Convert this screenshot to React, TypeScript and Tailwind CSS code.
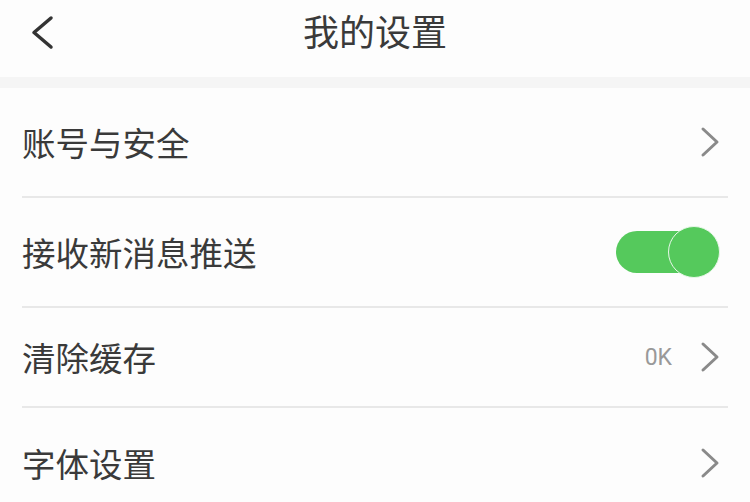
import React from "react";

const Chevron = () => (
  <svg width="20" height="32" viewBox="0 0 20 32" className="shrink-0">
    <polyline points="3,3 17,16 3,29" fill="none" stroke="#8a8a8a" strokeWidth="3" strokeLinecap="round" strokeLinejoin="round" />
  </svg>
);

const Toggle = () => (
  <div className="relative w-[104px] h-[52px] flex items-center shrink-0">
    <div className="w-[90px] h-[42px] rounded-full bg-[#55c95c]" />
    <div className="absolute right-0 top-0 w-[52px] h-[52px] rounded-full bg-[#55c95c] border-[1.5px] border-[#e8f7e9]" />
  </div>
);

export default function App() {
  const font = { fontFamily: '"Noto Sans CJK SC", "Noto Sans", sans-serif' };
  return (
    <div className="w-[750px] h-[502px] overflow-hidden bg-[#fdfdfd] text-[#3a3a3a]" style={font}>
      <div className="relative h-[77px] flex items-center justify-center">
        <svg width="24" height="36" viewBox="0 0 24 36" className="absolute left-[31px] top-[15px]">
          <polyline points="20,3 3,17.5 20,32" fill="none" stroke="#333333" strokeWidth="3.5" strokeLinecap="round" strokeLinejoin="round" />
        </svg>
        <div className="text-[36px] leading-none mb-[18px]">我的设置</div>
      </div>
      <div className="h-[11px] bg-[#f5f5f5]" />
      <div className="mx-[22px]">
        <div className="h-[110px] flex items-center justify-between border-b-2 border-[#e8e8e8] pr-[8px]">
          <span className="text-[33.5px] leading-none">账号与安全</span>
          <Chevron />
        </div>
        <div className="h-[110px] flex items-center justify-between border-b-2 border-[#e8e8e8] pr-[8px]">
          <span className="text-[33.5px] leading-none">接收新消息推送</span>
          <Toggle />
        </div>
        <div className="h-[100px] flex items-center justify-between border-b-2 border-[#e8e8e8] pr-[8px]">
          <span className="text-[33.5px] leading-none">清除缓存</span>
          <div className="flex items-center gap-[28px]">
            <span className="text-[23px] leading-none text-[#999999]" style={{ fontFamily: 'Roboto, "Noto Sans", sans-serif' }}>0K</span>
            <Chevron />
          </div>
        </div>
        <div className="h-[110px] flex items-center justify-between pr-[8px]">
          <span className="text-[33.5px] leading-none">字体设置</span>
          <Chevron />
        </div>
      </div>
    </div>
  );
}
